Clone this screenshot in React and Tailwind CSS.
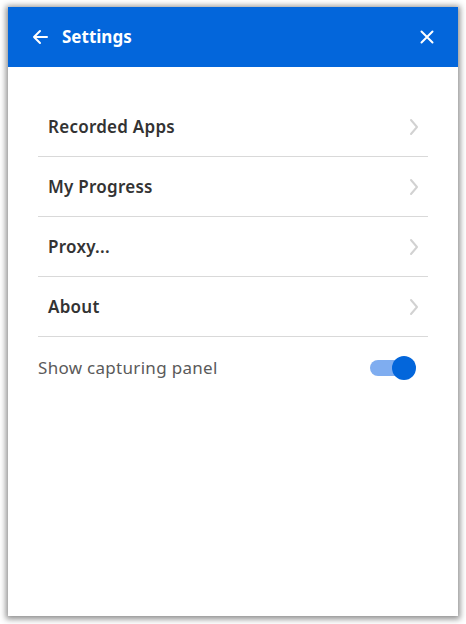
import React from "react";

function Chevron() {
  return (
    <svg width="10" height="18" viewBox="0 0 10 18" fill="none">
      <path d="M2 2l6 7-6 7" stroke="#d2d2d2" strokeWidth="2" strokeLinecap="round" strokeLinejoin="round" />
    </svg>
  );
}

function Row({ label }) {
  return (
    <div className="flex items-center justify-between h-[60px] border-b border-[#d9d9d9] pl-[10px] pr-[9px]">
      <span className="text-[17px] font-semibold tracking-[0.25px] text-[#333333]">{label}</span>
      <Chevron />
    </div>
  );
}

export default function App() {
  return (
    <div className="w-[466px] h-[624px] bg-white pt-[7px] pl-[8px]" style={{ fontFamily: '"Noto Sans", "Open Sans", sans-serif' }}>
      <div className="w-[450px] h-[609px] bg-white flex flex-col shadow-[0_1px_6px_2px_rgba(0,0,0,0.45)]">
        <div className="h-[60px] bg-[#0366db] flex items-center justify-between pl-[24px] pr-[24px]">
          <div className="flex items-center gap-[14px]">
            <svg width="16" height="16" viewBox="0 0 16 16" fill="none">
              <path d="M15 8H2M8 2L2 8l6 6" stroke="white" strokeWidth="2" strokeLinecap="round" strokeLinejoin="round" />
            </svg>
            <span className="text-[17px] font-bold text-white">Settings</span>
          </div>
          <svg width="14" height="14" viewBox="0 0 14 14" fill="none">
            <path d="M1.5 1.5l11 11M12.5 1.5l-11 11" stroke="white" strokeWidth="2" strokeLinecap="round" />
          </svg>
        </div>
        <div className="pt-[30px] pl-[30px] pr-[30px]">
          <Row label="Recorded Apps" />
          <Row label="My Progress" />
          <Row label="Proxy..." />
          <Row label="About" />
          <div className="flex items-center justify-between h-[62px] pr-[12px]">
            <span className="text-[17px] tracking-[0.3px] text-[#5a5a5a]">Show capturing panel</span>
            <div className="relative w-[46px] h-[24px] flex items-center">
              <div className="w-[34px] h-[16px] rounded-full bg-[#7fadf0]" />
              <div className="absolute right-0 w-[24px] h-[24px] rounded-full bg-[#0366db]" />
            </div>
          </div>
        </div>
      </div>
    </div>
  );
}
